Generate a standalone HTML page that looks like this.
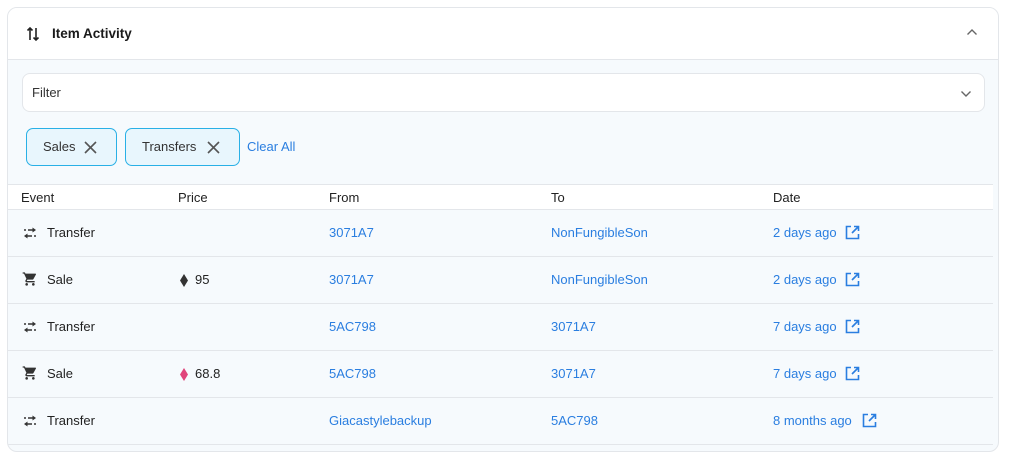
<!DOCTYPE html>
<html><head><style>
*{box-sizing:border-box;margin:0;padding:0}
body{width:1016px;height:460px;background:#fff;font-family:"Liberation Sans",sans-serif;font-size:13px;color:#222;position:relative;overflow:hidden}
.card{position:absolute;left:7px;top:7px;width:992px;height:445px;border:1px solid #e3e6ea;border-radius:10px;background:#f6fafd;overflow:hidden}
.hdr{position:absolute;left:0;top:0;right:0;height:52px;background:#fff;border-bottom:1px solid #e3e6ea}
.title{position:absolute;left:44px;top:18px;font-weight:bold;font-size:13.5px;color:#1a1a1a}
.filter{position:absolute;left:14px;top:65px;width:963px;height:39px;background:#fff;border:1px solid #e3e6ea;border-radius:8px}
.filter span{position:absolute;left:9px;top:11px;color:#333}
.chip{position:absolute;top:120px;height:38px;border:1px solid #29b0e6;border-radius:7px;background:#e8f6fd;color:#333}
.chip span{position:absolute;left:16px;top:10px}
.clear{position:absolute;left:239px;top:131px;color:#2a7ee0}
.th{position:absolute;left:0;top:176px;width:985px;height:26px;background:#fff;border-top:1px solid #e3e6ea;border-bottom:1px solid #e3e6ea}
.c{position:absolute}
.row{position:absolute;left:0;width:985px;height:47px;border-bottom:1px solid #e3e6ea}
.row .c{top:15px}
a{color:#2a7ee0;text-decoration:none}
</style></head><body>
<div class="card">
<div class="hdr">
<svg class="c" style="left:18px;top:18px" width="14" height="16" viewBox="0 0 14 16"><path d="M4 14V2M1.5 4.5L4 2l2.5 2.5M10 2v12M7.5 11.5L10 14l2.5-2.5" stroke="#222" stroke-width="1.6" fill="none"/></svg>
<div class="title">Item Activity</div>
<svg class="c" style="left:958px;top:20px" width="12" height="8" viewBox="0 0 12 8"><path d="M1.5 6.5L6 2l4.5 4.5" stroke="#666" stroke-width="1.4" fill="none"/></svg>
</div>
<div class="filter"><span>Filter</span>
<svg class="c" style="left:937px;top:16px" width="12" height="8" viewBox="0 0 12 8"><path d="M1.5 1.5L6 6l4.5-4.5" stroke="#666" stroke-width="1.4" fill="none"/></svg></div>
<div class="chip" style="left:18px;width:91px"><span>Sales</span><svg class="c" style="left:57px;top:12px" width="13" height="13"><path d="M1 1l11 11M12 1L1 12" stroke="#555" stroke-width="1.6"/></svg></div>
<div class="chip" style="left:117px;width:115px"><span>Transfers</span><svg class="c" style="left:81px;top:12px" width="13" height="13"><path d="M1 1l11 11M12 1L1 12" stroke="#555" stroke-width="1.6"/></svg></div>
<div class="clear">Clear All</div>
<div class="th"><div class="c" style="left:13px;top:5px">Event</div><div class="c" style="left:170px;top:5px">Price</div><div class="c" style="left:321px;top:5px">From</div><div class="c" style="left:543px;top:5px">To</div><div class="c" style="left:765px;top:5px">Date</div></div>

<div class="row" style="top:202px">
<svg class="c" style="left:15px;top:17px" width="14" height="12" viewBox="0 0 14 12"><path d="M1 3h2M5 3h6" stroke="#333" stroke-width="1.4"/><path d="M9.5 0.5L13 3l-3.5 2.5z" fill="#333"/><path d="M13 9h-2M9 9H3" stroke="#333" stroke-width="1.4"/><path d="M4.5 6.5L1 9l3.5 2.5z" fill="#333"/></svg>
<div class="c" style="left:39px">Transfer</div><a class="c" style="left:321px">3071A7</a><a class="c" style="left:543px">NonFungibleSon</a><a class="c" style="left:765px">2 days ago</a>
<svg class="c" style="left:837px;top:15px" width="15" height="15" viewBox="0 0 15 15"><path d="M6 1.5H1.5v12h12V9M9 1.5h4.5V6M13.5 1.5L7 8" stroke="#2a7ee0" stroke-width="1.6" fill="none"/></svg></div>

<div class="row" style="top:249px">
<svg class="c" style="left:14px;top:14px" width="16" height="16" viewBox="0 0 24 24"><path fill="#333" d="M7 18c-1.1 0-2 .9-2 2s.9 2 2 2 2-.9 2-2-.9-2-2-2zM1 2v2h2l3.6 7.6-1.4 2.4c-.1.3-.2.6-.2 1 0 1.1.9 2 2 2h12v-2H7.4c-.1 0-.2-.1-.2-.2v-.1l.9-1.7h7.4c.8 0 1.4-.4 1.7-1l3.6-6.5c.1-.2.2-.3.2-.5 0-.6-.5-1-1-1H5.2l-.9-2H1zm16 16c-1.1 0-2 .9-2 2s.9 2 2 2 2-.9 2-2-.9-2-2-2z"/></svg>
<div class="c" style="left:39px">Sale</div>
<svg class="c" style="left:172px;top:17px" width="8" height="13" viewBox="0 0 8 13"><path d="M4 0L0 6.5 4 13 8 6.5z" fill="#333"/></svg>
<div class="c" style="left:187px">95</div><a class="c" style="left:321px">3071A7</a><a class="c" style="left:543px">NonFungibleSon</a><a class="c" style="left:765px">2 days ago</a>
<svg class="c" style="left:837px;top:15px" width="15" height="15" viewBox="0 0 15 15"><path d="M6 1.5H1.5v12h12V9M9 1.5h4.5V6M13.5 1.5L7 8" stroke="#2a7ee0" stroke-width="1.6" fill="none"/></svg></div>

<div class="row" style="top:296px">
<svg class="c" style="left:15px;top:17px" width="14" height="12" viewBox="0 0 14 12"><path d="M1 3h2M5 3h6" stroke="#333" stroke-width="1.4"/><path d="M9.5 0.5L13 3l-3.5 2.5z" fill="#333"/><path d="M13 9h-2M9 9H3" stroke="#333" stroke-width="1.4"/><path d="M4.5 6.5L1 9l3.5 2.5z" fill="#333"/></svg>
<div class="c" style="left:39px">Transfer</div><a class="c" style="left:321px">5AC798</a><a class="c" style="left:543px">3071A7</a><a class="c" style="left:765px">7 days ago</a>
<svg class="c" style="left:837px;top:15px" width="15" height="15" viewBox="0 0 15 15"><path d="M6 1.5H1.5v12h12V9M9 1.5h4.5V6M13.5 1.5L7 8" stroke="#2a7ee0" stroke-width="1.6" fill="none"/></svg></div>

<div class="row" style="top:343px">
<svg class="c" style="left:14px;top:14px" width="16" height="16" viewBox="0 0 24 24"><path fill="#333" d="M7 18c-1.1 0-2 .9-2 2s.9 2 2 2 2-.9 2-2-.9-2-2-2zM1 2v2h2l3.6 7.6-1.4 2.4c-.1.3-.2.6-.2 1 0 1.1.9 2 2 2h12v-2H7.4c-.1 0-.2-.1-.2-.2v-.1l.9-1.7h7.4c.8 0 1.4-.4 1.7-1l3.6-6.5c.1-.2.2-.3.2-.5 0-.6-.5-1-1-1H5.2l-.9-2H1zm16 16c-1.1 0-2 .9-2 2s.9 2 2 2 2-.9 2-2-.9-2-2-2z"/></svg>
<div class="c" style="left:39px">Sale</div>
<svg class="c" style="left:172px;top:17px" width="8" height="13" viewBox="0 0 8 13"><path d="M4 0L0 6.5 4 13 8 6.5z" fill="#e0457b"/></svg>
<div class="c" style="left:187px">68.8</div><a class="c" style="left:321px">5AC798</a><a class="c" style="left:543px">3071A7</a><a class="c" style="left:765px">7 days ago</a>
<svg class="c" style="left:837px;top:15px" width="15" height="15" viewBox="0 0 15 15"><path d="M6 1.5H1.5v12h12V9M9 1.5h4.5V6M13.5 1.5L7 8" stroke="#2a7ee0" stroke-width="1.6" fill="none"/></svg></div>

<div class="row" style="top:390px">
<svg class="c" style="left:15px;top:17px" width="14" height="12" viewBox="0 0 14 12"><path d="M1 3h2M5 3h6" stroke="#333" stroke-width="1.4"/><path d="M9.5 0.5L13 3l-3.5 2.5z" fill="#333"/><path d="M13 9h-2M9 9H3" stroke="#333" stroke-width="1.4"/><path d="M4.5 6.5L1 9l3.5 2.5z" fill="#333"/></svg>
<div class="c" style="left:39px">Transfer</div><a class="c" style="left:321px">Giacastylebackup</a><a class="c" style="left:543px">5AC798</a><a class="c" style="left:765px">8 months ago</a>
<svg class="c" style="left:854px;top:15px" width="15" height="15" viewBox="0 0 15 15"><path d="M6 1.5H1.5v12h12V9M9 1.5h4.5V6M13.5 1.5L7 8" stroke="#2a7ee0" stroke-width="1.6" fill="none"/></svg></div>
</div>
</body></html>
